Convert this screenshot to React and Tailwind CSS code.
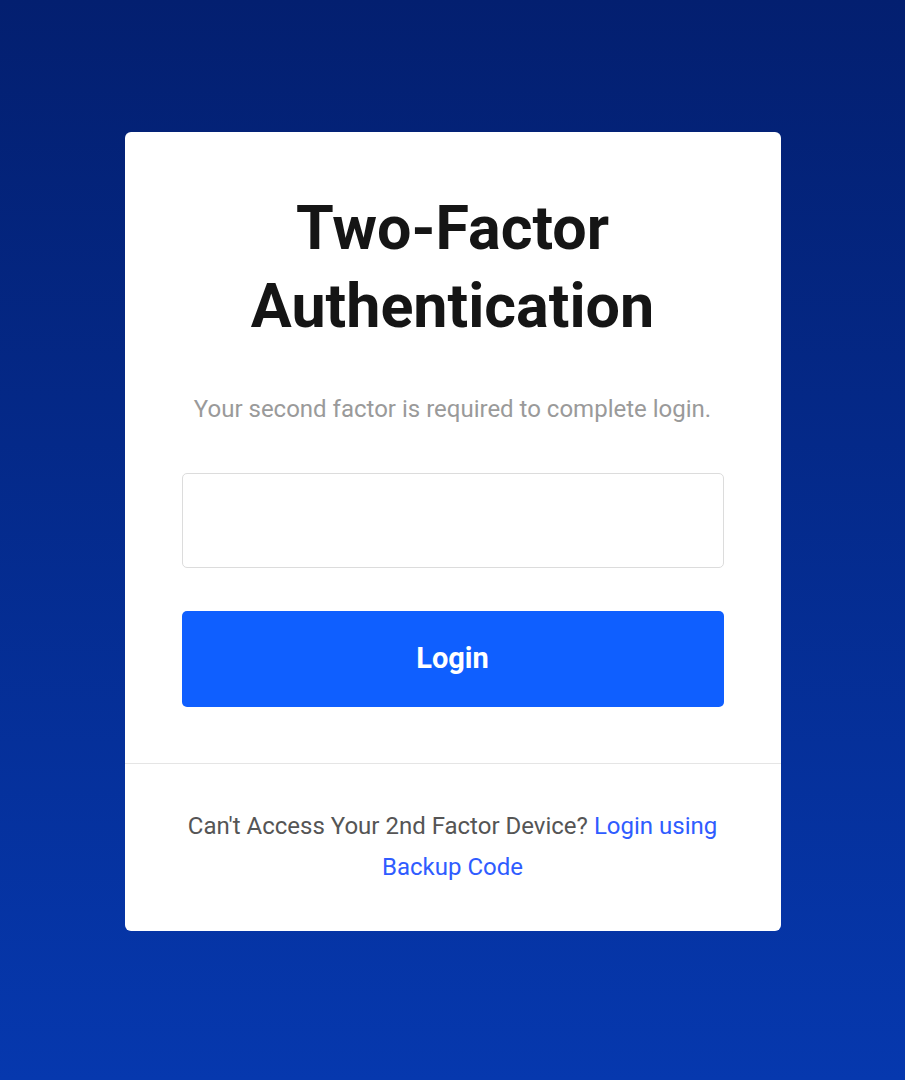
export default function App() {
  return (
    <div className="min-h-screen w-full bg-gradient-to-b from-[#031f70] to-[#0638ae] flex justify-center pt-[132px] pb-[149px] font-['Roboto',sans-serif]">
      <div className="w-[656px] h-fit bg-white rounded-md flex flex-col">
        <div className="px-[57px] pt-[57px] pb-[56px] flex flex-col items-center">
          <h1 className="text-[61px] leading-[78px] font-bold text-[#151515] text-center">
            Two-Factor
            <br />
            Authentication
          </h1>
          <p className="mt-[50px] text-[24px] leading-[28px] text-[#9a9a9a] text-center whitespace-nowrap">
            Your second factor is required to complete login.
          </p>
          <input
            type="text"
            className="mt-[50px] w-full h-[95px] border border-[#dcdcdc] rounded-[5px] px-4 text-xl outline-none"
          />
          <button className="mt-[43px] w-full h-[96px] bg-[#0f5fff] rounded-[5px] text-white text-[29px] font-bold">
            Login
          </button>
        </div>
        <div className="border-t border-[#e5e5e5] px-[50px] pt-[42px] pb-[43px] text-center text-[24px] leading-[41px] text-[#555555]">
          Can't Access Your 2nd Factor Device?{' '}
          <a href="#" className="text-[#2f5cff]">
            Login using Backup Code
          </a>
        </div>
      </div>
    </div>
  );
}
